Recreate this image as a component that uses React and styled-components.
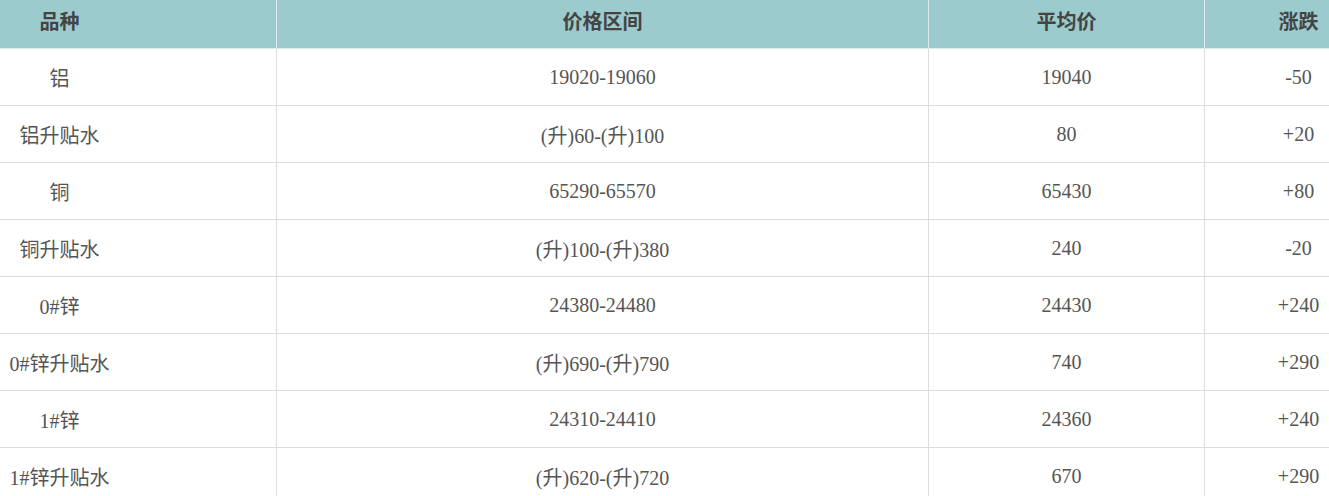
import React from 'react'
import styled, { createGlobalStyle } from 'styled-components';

const GlobalStyle = createGlobalStyle`
  html, body {
    margin: 0;
    padding: 0;
    background: #fff;
    overflow: hidden;
  }
`;

const rows = [
  { name: '铝', range: '19020-19060', avg: '19040', change: '-50' },
  { name: '铝升贴水', range: '(升)60-(升)100', avg: '80', change: '+20' },
  { name: '铜', range: '65290-65570', avg: '65430', change: '+80' },
  { name: '铜升贴水', range: '(升)100-(升)380', avg: '240', change: '-20' },
  { name: '0#锌', range: '24380-24480', avg: '24430', change: '+240' },
  { name: '0#锌升贴水', range: '(升)690-(升)790', avg: '740', change: '+290' },
  { name: '1#锌', range: '24310-24410', avg: '24360', change: '+240' },
  { name: '1#锌升贴水', range: '(升)620-(升)720', avg: '670', change: '+290' },
];

const Wrap = styled.div`
  width: 1329px;
  overflow: hidden;
`;

const Table = styled.table`
  margin-left: -158px;
  width: 1550px;
  border-collapse: collapse;
  table-layout: fixed;
  font-family: "Liberation Serif", "Noto Sans CJK SC", serif;
  font-size: 20px;
`;

const Head = styled.th`
  width: ${props => props.w}px;
  height: 48px;
  padding: 0 0 7px;
  box-sizing: border-box;
  background: #9bcbcd;
  color: #444;
  font-weight: bold;
  text-align: center;
  border: 1px solid #dde9ea;
  border-top: none;
`;

const Cell = styled.td`
  height: 57px;
  padding: 2px 0 0;
  box-sizing: border-box;
  color: #555;
  text-align: center;
  border: 1px solid #ddd;
`;

const App = () => (
  <Wrap>
    <GlobalStyle />
    <Table>
      <thead>
        <tr>
          <Head w={434}>品种</Head>
          <Head w={652}>价格区间</Head>
          <Head w={276}>平均价</Head>
          <Head w={188}>涨跌</Head>
        </tr>
      </thead>
      <tbody>
        {rows.map(r => (
          <tr key={r.name}>
            <Cell>{r.name}</Cell>
            <Cell>{r.range}</Cell>
            <Cell>{r.avg}</Cell>
            <Cell>{r.change}</Cell>
          </tr>
        ))}
      </tbody>
    </Table>
  </Wrap>
)

export default App;
